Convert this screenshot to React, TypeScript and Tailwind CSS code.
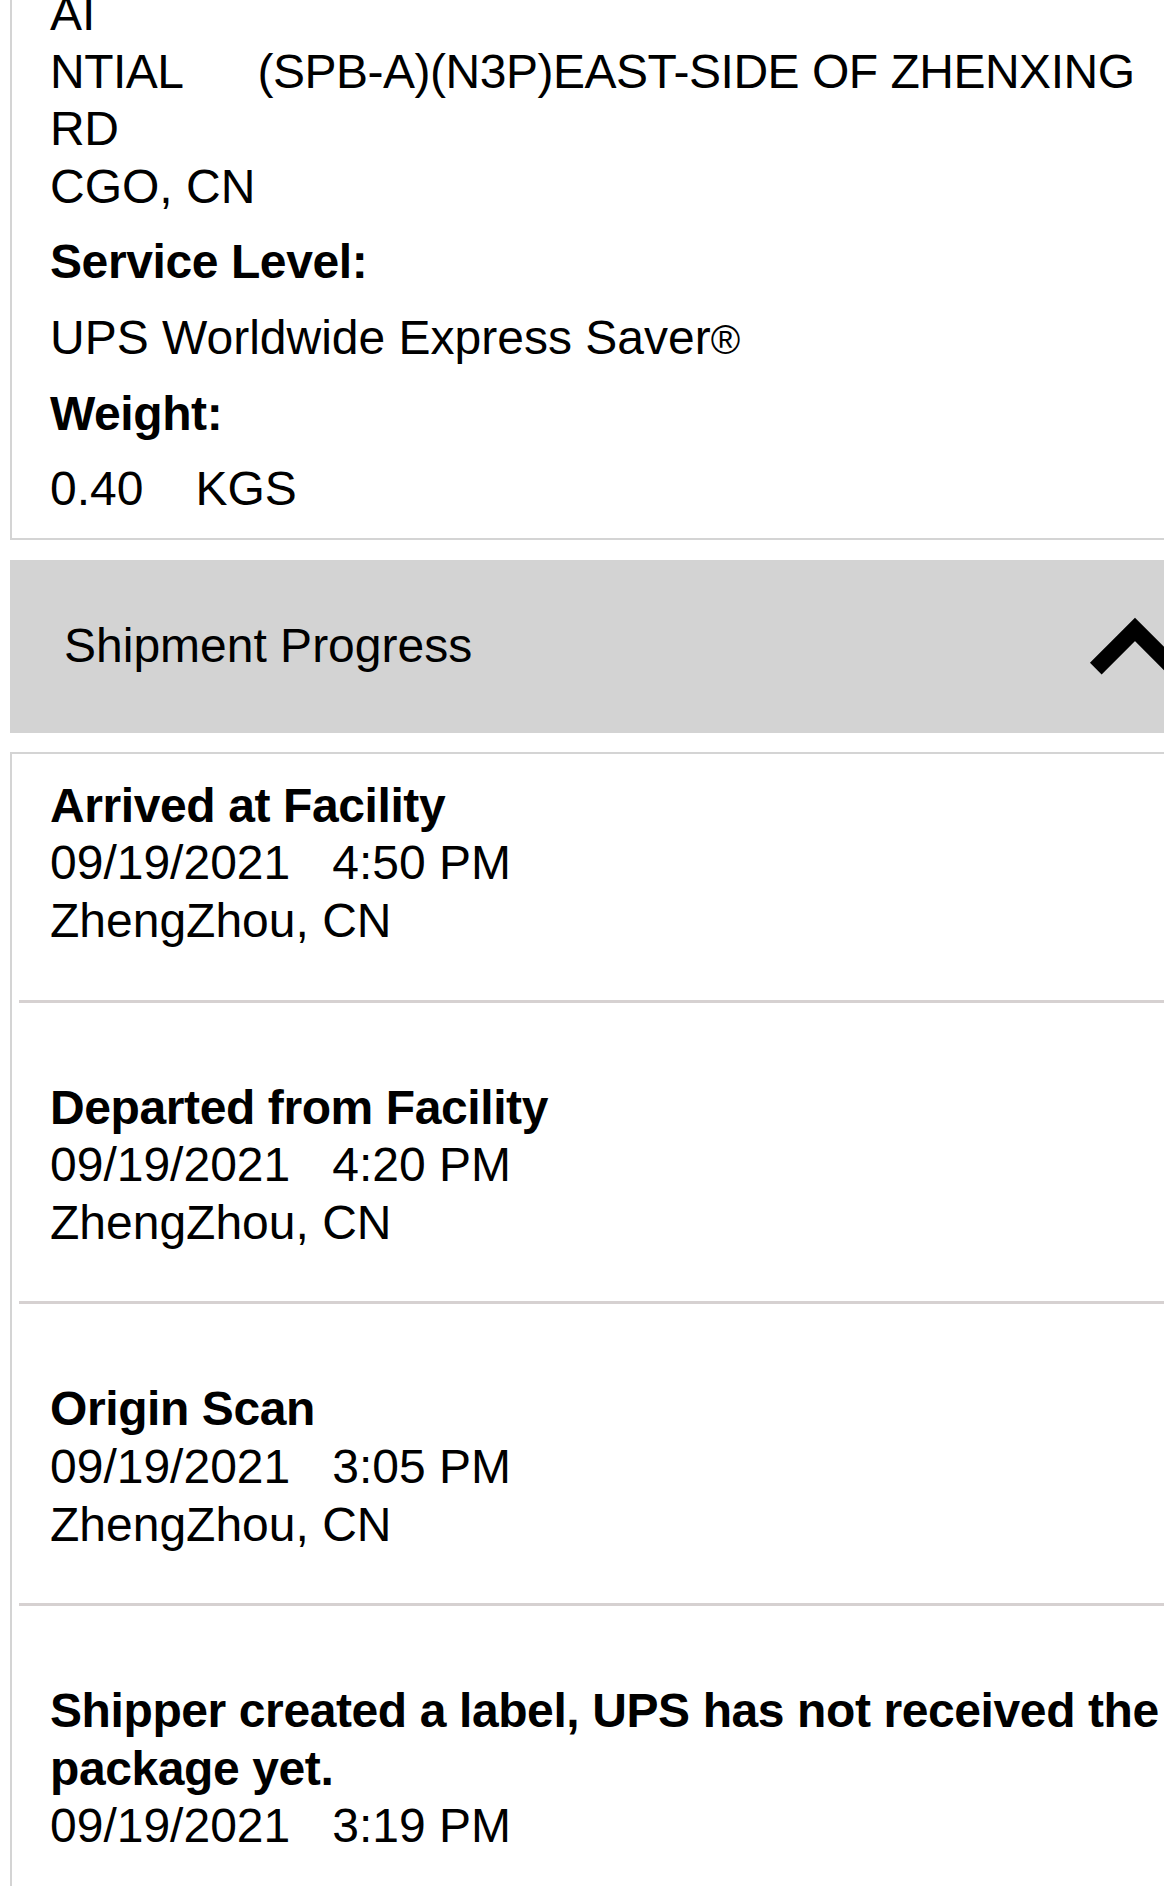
import React from 'react';

// Tracking events, newest first
const events = [
  { id: 1, status: 'Arrived at Facility', date: '09/19/2021', time: '4:50 PM', location: 'ZhengZhou, CN' },
  { id: 2, status: 'Departed from Facility', date: '09/19/2021', time: '4:20 PM', location: 'ZhengZhou, CN' },
  { id: 3, status: 'Origin Scan', date: '09/19/2021', time: '3:05 PM', location: 'ZhengZhou, CN' },
  {
    id: 4,
    status: 'Shipper created a label, UPS has not received the package yet.',
    date: '09/19/2021',
    time: '3:19 PM',
    location: '',
  },
];

const ChevronUp = () => (
  <svg width="100" height="60" viewBox="0 0 100 60" className="shrink-0">
    <path
      d="M10.8 52.7 L50 13.5 L89.2 52.7"
      fill="none"
      stroke="#000"
      strokeWidth="16.5"
      strokeLinejoin="miter"
      strokeLinecap="butt"
    />
  </svg>
);

const EventRow = ({ event, first }: { event: typeof events[0]; first: boolean }) => {
  return (
    <div className={`pl-[38px] pr-[30px] pb-[50px] ${first ? 'pt-[23px]' : 'pt-[76px]'}`}>
      <div className="font-bold tracking-[-0.4px]">{event.status}</div>
      <div>
        <span>{event.date}</span>
        <span className="ml-[42px]">{event.time}</span>
      </div>
      {event.location && <div>{event.location}</div>}
    </div>
  );
};

const App = () => {
  return (
    <div className="h-[1886px] w-[1164px] overflow-hidden bg-white text-black font-['Liberation_Sans',Arial,sans-serif] text-[48px] leading-[57.6px]">
      <div className="w-[1230px] pl-[10px]">
        {/* Shipment details (scrolled past the top) */}
        <section className="-mt-[40px] border-2 border-[#d4d4d4] pt-[23px] pb-[20px] pl-[38px] pr-[30px]">
          <div>
            <div>AI</div>
            <div>
              <span className="tracking-[-0.5px]">NTIAL</span>
              <span className="ml-[74px] tracking-[-0.5px]">(SPB-A)(N3P)EAST-SIDE OF ZHENXING RD</span>
            </div>
            <div>CGO, CN</div>
          </div>
          <div className="mt-[18px] font-bold tracking-[-0.4px]">Service Level:</div>
          <div className="mt-[18px] h-[57.6px]">
            UPS Worldwide Express Saver<span className="text-[40px] leading-none">®</span>
          </div>
          <div className="mt-[18px] font-bold tracking-[-0.4px]">Weight:</div>
          <div className="mt-[18px]">
            <span>0.40</span>
            <span className="ml-[52px]">KGS</span>
          </div>
        </section>

        {/* Accordion header */}
        <div className="mt-[20px] flex h-[173px] items-center justify-between bg-[#d3d3d3] pl-[54px] pr-[45px]">
          <span>Shipment Progress</span>
          <ChevronUp />
        </div>

        {/* Progress list */}
        <section className="mt-[19px] border-2 border-[#d4d4d4]">
          {events.map((event, i) => (
            <div key={event.id}>
              {i > 0 && <div className="ml-[7px] h-[3px] bg-[#d6d1d1]" />}
              <EventRow event={event} first={i === 0} />
            </div>
          ))}
        </section>
      </div>
    </div>
  );
};

export default App;
